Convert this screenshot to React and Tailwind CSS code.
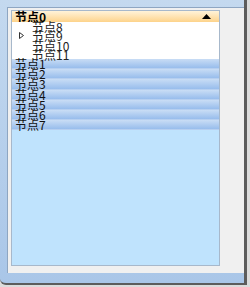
import React from "react";

const font = { fontFamily: '"Noto Sans CJK SC", "Noto Sans", sans-serif' };

export default function App() {
  const children = ["节点8", "节点9", "节点10", "节点11"];
  const rows = ["节点1", "节点2", "节点3", "节点4", "节点5", "节点6", "节点7"];
  return (
    <div className="w-[250px] h-[287px] bg-[#dcdcdc] overflow-hidden" style={font}>
      <div className="w-[247px] h-[285px] flex flex-col border-r-[3px] border-b-[2px] border-[#5c5c5c] bg-gradient-to-b from-[#c4d9ef] to-[#a9c6e8] rounded-bl-[6px]">
        <div className="flex flex-col pl-[7px] pt-[7px] pb-[10px] h-full">
          <div className="flex-1 bg-[#f0f0f0] border-l border-t border-[#8ea6c2] pl-[3px] pt-[2px]">
            <div className="w-[209px] h-[256px] border border-[#a7b8cb] bg-[#bfe3fd] flex flex-col text-[12px] text-black">
              <div className="h-[11px] flex items-center justify-between pl-[3px] pr-[8px] bg-gradient-to-b from-[#fff3d9] to-[#fdd38a]">
                <span className="font-bold leading-[10px]">节点0</span>
                <svg width="9" height="5" viewBox="0 0 9 5"><path d="M0 5 L4.5 0 L9 5 Z" fill="#000" /></svg>
              </div>
              <div className="h-[37px] bg-white flex flex-col">
                {children.map((c, i) => (
                  <div key={c} className="h-[9.25px] flex items-center relative">
                    {i === 1 && (
                      <svg className="absolute left-[7px]" width="5" height="7" viewBox="0 0 5 7"><path d="M0.5 0.5 L4.5 3.5 L0.5 6.5 Z" fill="none" stroke="#333" strokeWidth="1" /></svg>
                    )}
                    <span className="pl-[20px] leading-[9px] text-[#222]">{c}</span>
                  </div>
                ))}
              </div>
              {rows.map((r) => (
                <div key={r} className="h-[10.2px] flex items-center pl-[3px] bg-gradient-to-b from-[#c9ddf5] to-[#98bdec] border-b border-[#b6cff0]">
                  <span className="leading-[9px] text-[#111]">{r}</span>
                </div>
              ))}
            </div>
          </div>
        </div>
      </div>
    </div>
  );
}
